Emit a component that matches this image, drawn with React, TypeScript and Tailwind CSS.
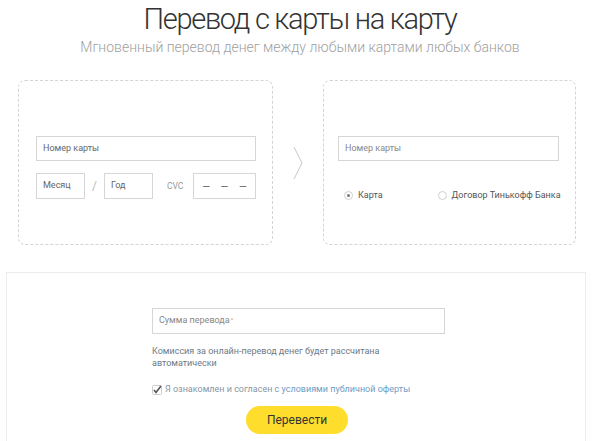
import React from "react";

const Field = ({ label, className }: { label: string; className?: string }) => (
  <div
    className={`h-[25px] border border-[#d6d6d6] bg-white flex items-center px-[6px] text-[9px] text-[#666] ${className ?? ""}`}
  >
    {label}
  </div>
);

const Radio = ({ label, checked }: { label: string; checked?: boolean }) => (
  <label className="flex items-center gap-[5px] text-[9px] text-[#555] whitespace-nowrap">
    <span className="w-[9px] h-[9px] rounded-full border border-[#cfcfcf] flex items-center justify-center">
      {checked && <span className="w-[3px] h-[3px] rounded-full bg-[#777]" />}
    </span>
    {label}
  </label>
);

export default function App() {
  return (
    <div className="w-[600px] h-[441px] overflow-hidden bg-white font-['Roboto','Liberation_Sans',sans-serif]">
      <div className="flex flex-col items-center pt-[2px]">
        <h1 className="text-[29px] leading-[34px] font-light text-[#333] tracking-[-1.3px]">
          Перевод с карты на карту
        </h1>
        <p className="text-[14px] leading-[18px] font-light text-[#a0a0a0] mt-[2px]">
          Мгновенный перевод денег между любыми картами любых банков
        </p>
      </div>

      <div className="flex items-center mt-[24px] ml-[18px]">
        <div className="w-[255px] h-[165px] border border-dashed border-[#d4d4d4] rounded-[7px] pt-[55px] pl-[17px] pr-[16px]">
          <Field label="Номер карты" />
          <div className="flex items-center mt-[12px]">
            <Field label="Месяц" className="w-[49px] h-[26px]" />
            <span className="mx-[7px] text-[12px] text-[#bbb]">/</span>
            <Field label="Год" className="w-[49px] h-[26px]" />
            <span className="ml-[14px] text-[8.5px] text-[#999]">CVC</span>
            <div className="ml-auto w-[63px] h-[26px] border border-[#d6d6d6] flex items-center justify-around px-[3px] text-[#666] text-[10px]">
              <span>—</span>
              <span>—</span>
              <span>—</span>
            </div>
          </div>
        </div>

        <div className="w-[50px] flex justify-center">
          <svg width="10" height="34" viewBox="0 0 10 34" fill="none">
            <path d="M1 1 L9 17 L1 33" stroke="#c8c8c8" strokeWidth="1" />
          </svg>
        </div>

        <div className="w-[253px] h-[165px] border border-dashed border-[#d4d4d4] rounded-[7px] pt-[55px] pl-[14px] pr-[16px]">
          <Field label="Номер карты" className="text-[#888]" />
          <div className="flex items-center mt-[28px] pl-[6px]">
            <Radio label="Карта" checked />
            <div className="ml-[55px]">
              <Radio label="Договор Тинькофф Банка" />
            </div>
          </div>
        </div>
      </div>

      <div className="mt-[27px] ml-[6px] w-[580px] h-[200px] border border-[#ececec] flex flex-col items-center pt-[35px]">
        <div className="w-[293px] ml-[5px]">
          <div className="h-[26px] border border-[#d6d6d6] flex items-center px-[6px] text-[9px] text-[#888]">
            Сумма перевода<span className="text-[#e0a000] text-[6px] -mt-[4px] ml-[1px]">*</span>
          </div>
          <p className="mt-[11px] text-[9px] leading-[12px] text-[#6d7a86] w-[250px]">
            Комиссия за онлайн-перевод денег будет рассчитана автоматически
          </p>
          <div className="flex items-center gap-[3px] mt-[14px] text-[9px] text-[#8a96a3]">
            <svg width="10" height="10" viewBox="0 0 10 10">
              <rect x="0.5" y="0.5" width="9" height="9" rx="1" fill="none" stroke="#ccc" />
              <path d="M2 5 L4 7.5 L9 1" stroke="#555" strokeWidth="1.6" fill="none" />
            </svg>
            <span>
              Я ознакомлен и согласен с{" "}
              <span className="text-[#6f9cc4]">условиями публичной оферты</span>
            </span>
          </div>
        </div>
        <button className="mt-[9px] ml-[2px] w-[102px] h-[28px] rounded-full bg-[#fedd2c] text-[12px] text-[#333]">
          Перевести
        </button>
      </div>
    </div>
  );
}
